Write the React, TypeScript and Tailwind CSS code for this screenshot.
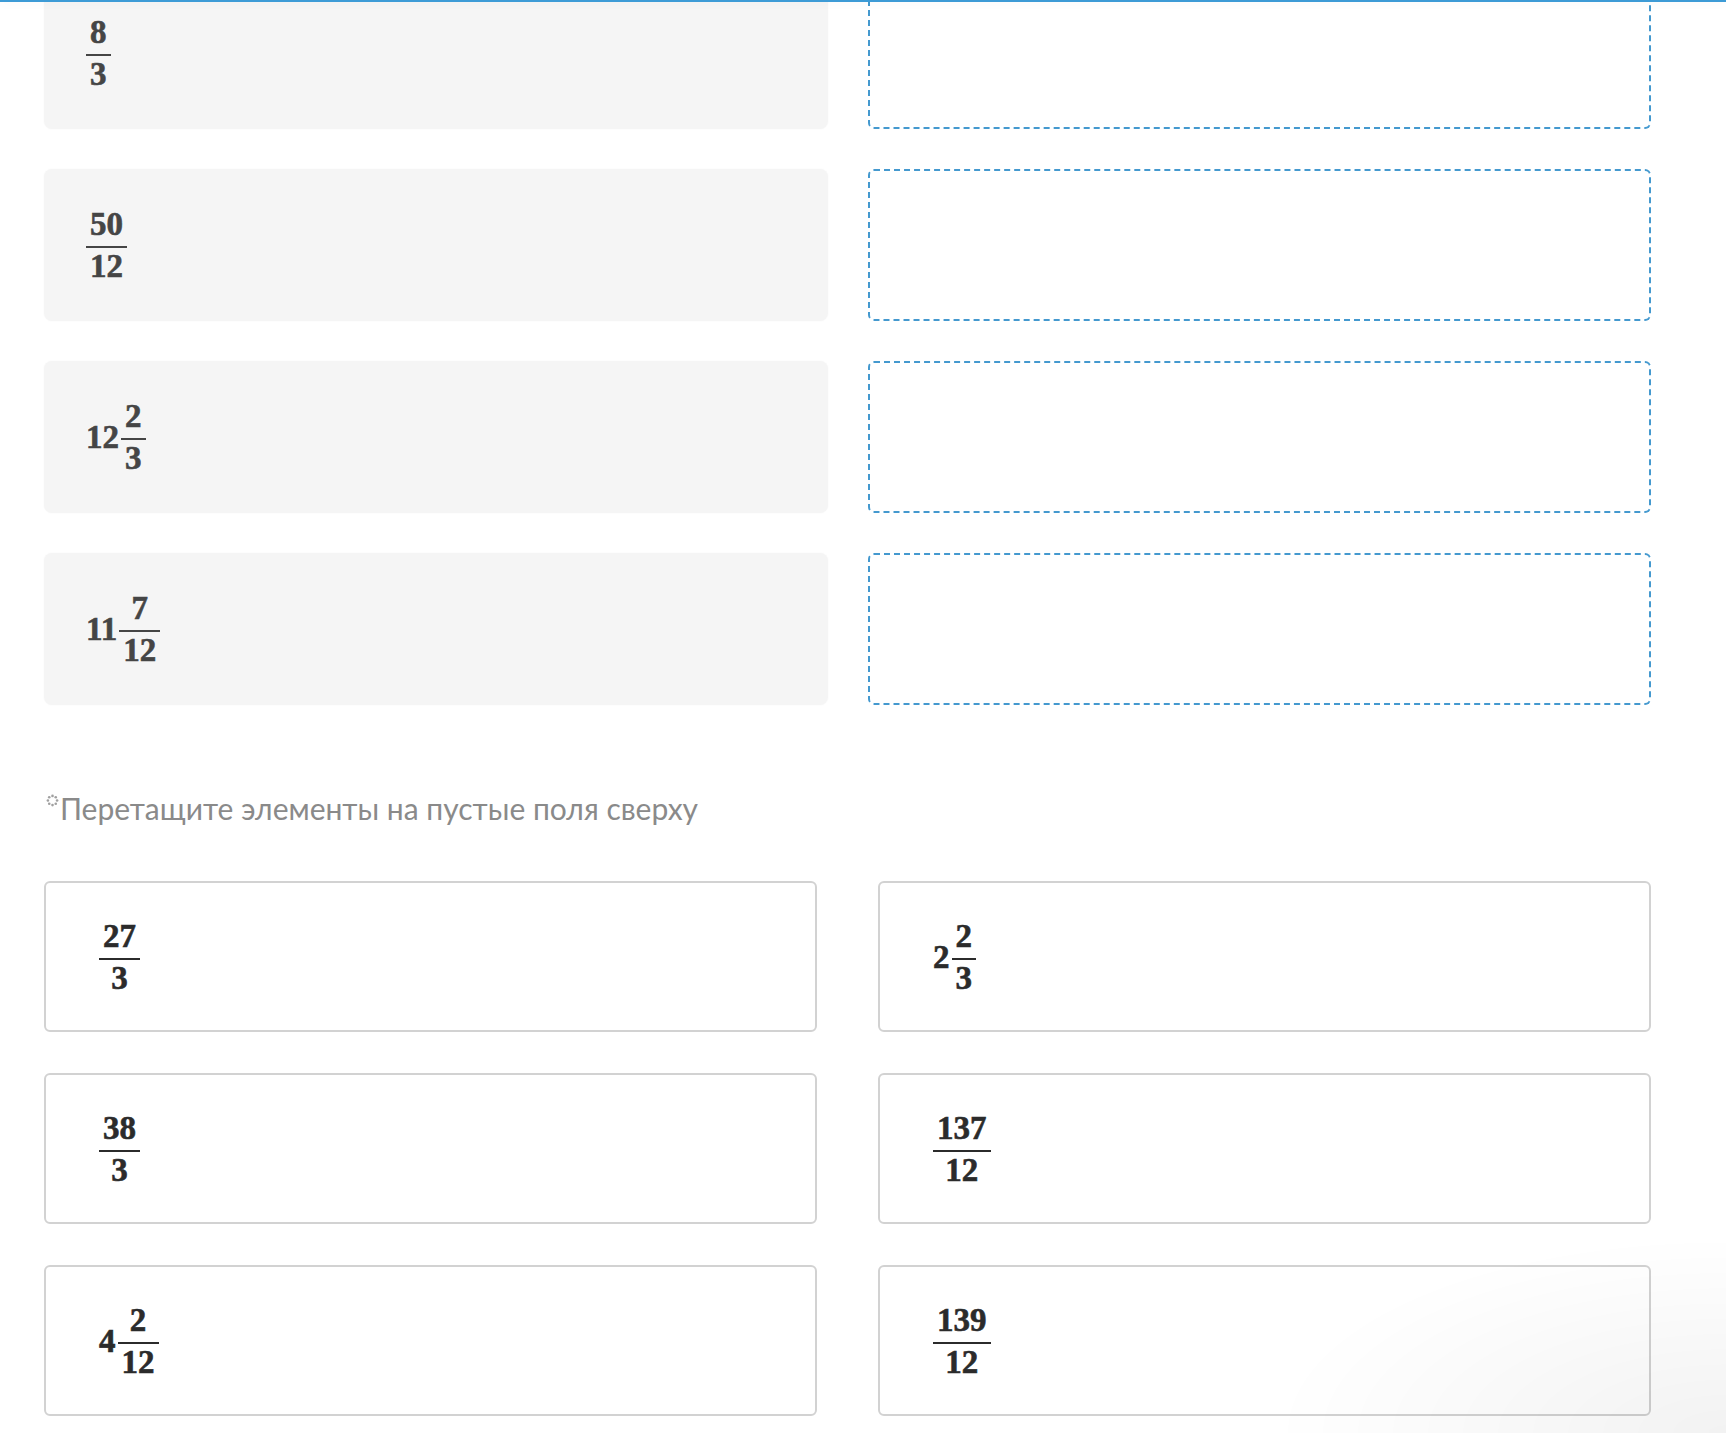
import React from 'react';

type Item = { whole?: string; n: string; d: string };

const targets: Item[] = [
    { n: '8', d: '3' },
    { n: '50', d: '12' },
    { whole: '12', n: '2', d: '3' },
    { whole: '11', n: '7', d: '12' },
];

const options: Item[] = [
    { n: '27', d: '3' },
    { whole: '2', n: '2', d: '3' },
    { n: '38', d: '3' },
    { n: '137', d: '12' },
    { whole: '4', n: '2', d: '12' },
    { n: '139', d: '12' },
];

function Fraction({ item }: { item: Item }) {
    return (
        <span className="inline-flex items-center font-bold text-[33px] font-['Liberation_Serif',serif] [-webkit-text-stroke:0.6px_currentColor]">
            {item.whole && <span className="leading-[34px] mr-[2px]">{item.whole}</span>}
            <span className="inline-flex flex-col text-center">
                <span className="px-[4px] leading-[34px] mb-[5px]">{item.n}</span>
                <span className="h-[2px] bg-current" />
                <span className="px-[4px] leading-[34px] mt-[1px]">{item.d}</span>
            </span>
        </span>
    );
}

function DotsIcon() {
    const dots = Array.from({ length: 8 }, (_, i) => {
        const a = (i / 8) * Math.PI * 2;
        return { x: 6.5 + Math.cos(a) * 4.6, y: 6.5 + Math.sin(a) * 4.6 };
    });
    return (
        <svg width="13" height="13" viewBox="0 0 13 13" className="mt-[6px] ml-[2px] mr-[1px] shrink-0">
            {dots.map((p, i) => (
                <circle key={i} cx={p.x} cy={p.y} r="1.3" fill="#a0a0a0" />
            ))}
        </svg>
    );
}

export default function App() {
    return (
        <div className="min-h-screen bg-white overflow-hidden">
            {/* header edge */}
            <div className="fixed top-0 inset-x-0 h-[2px] bg-[#3d9bd6] shadow-[0_2px_8px_rgba(0,0,0,0.05)] z-10" />

            <div className="pl-[44px] pr-[75px] -mt-[23px]">
                {/* match rows */}
                <div className="grid grid-cols-2 gap-x-10 gap-y-10">
                    {targets.map((item, i) => (
                        <React.Fragment key={i}>
                            <div className="h-[152px] rounded-lg bg-[#f5f5f5] shadow-[0_0_2px_rgba(0,0,0,0.04)] flex items-center pl-[42px] text-[#454545]">
                                <Fraction item={item} />
                            </div>
                            <div className="h-[152px] rounded-md border-2 border-dashed border-[#4499cf]" />
                        </React.Fragment>
                    ))}
                </div>

                {/* hint */}
                <div className="mt-[83px] flex items-start text-[30px] leading-[40px] text-[#8a8a8a] font-['Lato',sans-serif]">
                    <DotsIcon />
                    <span>Перетащите элементы на пустые поля сверху</span>
                </div>

                {/* draggable options */}
                <div className="mt-[53px] grid grid-cols-2 gap-x-[61px] gap-y-[41px]">
                    {options.map((item, i) => (
                        <div
                            key={i}
                            className="h-[151px] rounded-md border-2 border-[#d2d2d2] bg-white flex items-center pl-[53px] text-[#2b2b2b]"
                        >
                            <Fraction item={item} />
                        </div>
                    ))}
                </div>
            </div>

            <div className="fixed bottom-0 right-0 w-[460px] h-[200px] pointer-events-none bg-[radial-gradient(ellipse_at_bottom_right,rgba(0,0,0,0.05),transparent_70%)]" />
        </div>
    );
}
